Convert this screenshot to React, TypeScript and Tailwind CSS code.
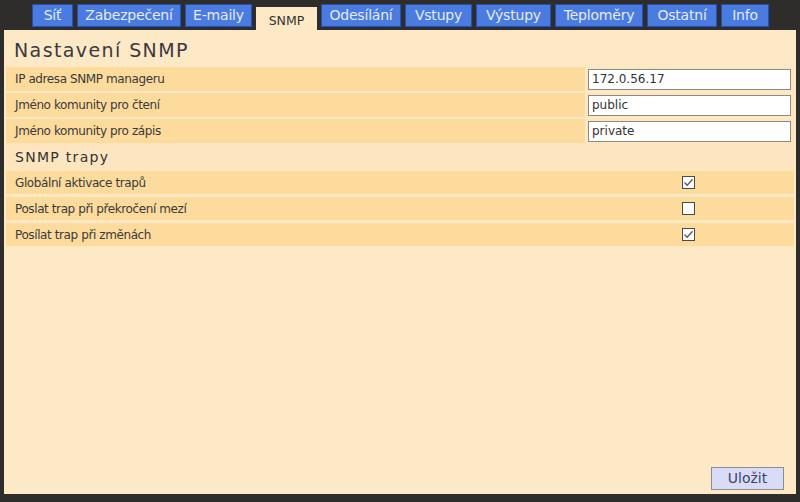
import { useState } from 'react'

const tabs = [
  { label: 'Síť', w: 'w-[41px]' },
  { label: 'Zabezpečení', w: 'w-[104px]' },
  { label: 'E-maily', w: 'w-[67px]' },
  { label: 'SNMP', w: 'w-[61px]', active: true },
  { label: 'Odesílání', w: 'w-[80px]' },
  { label: 'Vstupy', w: 'w-[67px]' },
  { label: 'Výstupy', w: 'w-[75px]' },
  { label: 'Teploměry', w: 'w-[88px]' },
  { label: 'Ostatní', w: 'w-[70px]' },
  { label: 'Info', w: 'w-[48px]' },
]

const fields = [
  { label: 'IP adresa SNMP manageru', value: '172.0.56.17' },
  { label: 'Jméno komunity pro čtení', value: 'public' },
  { label: 'Jméno komunity pro zápis', value: 'private' },
]

const traps = [
  { label: 'Globální aktivace trapů', on: true },
  { label: 'Poslat trap při překročení mezí', on: false },
  { label: 'Posílat trap při změnách', on: true },
]

function Check({ on }: { on: boolean }) {
  return (
    <span className="w-[13px] h-[13px] border border-[#4a4a4a] bg-white flex items-center justify-center">
      {on && (
        <svg width="11" height="11" viewBox="0 0 11 11">
          <path d="M1.5 5.5 L4.2 8.2 L9.5 2.2" fill="none" stroke="#555" strokeWidth="1.3" />
        </svg>
      )}
    </span>
  )
}

export default function App() {
  const [vals, setVals] = useState(fields.map((f) => f.value))

  return (
    <div className="w-[800px] h-[502px] bg-[#2f2d2b] flex flex-col font-['DejaVu_Sans',sans-serif] text-[#3a3a3a]">
      <div className="h-[30px] pl-[32px] pt-[4px] flex gap-[4px] items-start">
        {tabs.map((t) =>
          t.active ? (
            <div
              key={t.label}
              className={`${t.w} h-[26px] mt-[3px] bg-[#fde9c6] flex items-center justify-center pt-[2px] text-[12.5px] text-[#333]`}
            >
              {t.label}
            </div>
          ) : (
            <div
              key={t.label}
              className={`${t.w} h-[23px] bg-[#4a7be0] border border-[#2b4f9e] shadow-[1px_1px_0_#1d2f5a] flex items-center justify-center text-[14px] tracking-[-0.2px] text-[#e4ebff]`}
            >
              {t.label}
            </div>
          )
        )}
      </div>

      <div className="mx-[4px] h-[464px] bg-[#fde9c6] flex flex-col px-[2px]">
        <h1 className="text-[19px] tracking-[1.4px] text-[#3a3a40] pl-[8px] pt-[8px] h-[37px] leading-[24px]">
          Nastavení SNMP
        </h1>

        <div className="flex flex-col gap-[2px] text-[12px] tracking-[-0.4px]">
          {fields.map((f, i) => (
            <div key={f.label} className="flex h-[24px] gap-[2px]">
              <div className="flex-1 bg-[#fcdb9d] flex items-center pl-[9px]">{f.label}</div>
              <div className="w-[207px] bg-[#fde6bc] flex items-center pl-[1px]">
                <input
                  value={vals[i]}
                  onChange={(e) => setVals(vals.map((v, j) => (j === i ? e.target.value : v)))}
                  className="w-[203px] h-[21px] bg-white border border-[#8a8a8a] px-[3px] text-[12px] text-[#333] tracking-[0px] outline-none font-['DejaVu_Sans',sans-serif]"
                />
              </div>
            </div>
          ))}
        </div>

        <h2 className="text-[14px] tracking-[1.3px] text-[#333] pl-[9px] h-[28px] flex items-end pb-[3px] bg-[#fde6bf]">
          SNMP trapy
        </h2>

        <div className="flex flex-col gap-[3px] text-[12px] tracking-[-0.4px]">
          {traps.map((t) => (
            <div key={t.label} className="flex h-[23px] bg-[#fcdb9d]">
              <div className="flex-1 flex items-center pl-[9px]">{t.label}</div>
              <div className="w-[212px] flex items-center justify-center">
                <Check on={t.on} />
              </div>
            </div>
          ))}
        </div>

        <div className="mt-auto flex justify-end pr-[10px] pb-[4px]">
          <button className="w-[73px] h-[23px] bg-[#d9dcf7] border border-[#8c8c96] text-[14px] text-[#3b4466] font-['DejaVu_Sans',sans-serif]">
            Uložit
          </button>
        </div>
      </div>
    </div>
  )
}
